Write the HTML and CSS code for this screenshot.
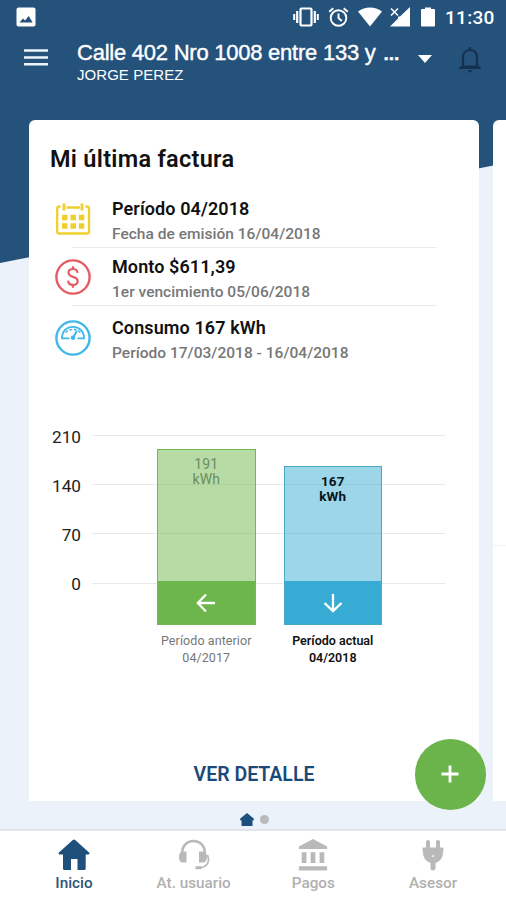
FILE: index.html
```html
<!DOCTYPE html>
<html lang="es">
<head>
<meta charset="utf-8">
<title>Mi última factura</title>
<link rel="stylesheet" href="styles.css">
</head>
<body>
<div class="app">
  <header class="header">
    <div class="status">
      <svg class="status-photo" width="20" height="20" viewBox="0 0 20 20"><rect x=".5" y=".5" width="19" height="19" rx="2" fill="#fff"/><path d="M3.500 15.500l3.500-4 2 2 3.700-4.500 4 6.500z" fill="#24527b"/></svg>
      <svg class="status-vibrate" width="26" height="20" viewBox="0 0 26 20" fill="none" stroke="#fff"><rect x="7.500" y="1.500" width="11" height="17" rx="1" stroke-width="2.200"/><path d="M4.200 4v12M21.800 4v12" stroke-width="2.200"/><path d="M1.200 7v6M24.800 7v6" stroke-width="2"/></svg>
      <svg class="status-alarm" width="21" height="20" viewBox="0 0 21 20" fill="none" stroke="#fff" stroke-width="1.900"><circle cx="10.500" cy="11" r="7.800"/><path d="M10.500 6.500V11l3.300 3M1.200 4.800l4.100-3.500M19.800 4.800l-4.100-3.500"/></svg>
      <svg class="status-wifi" width="24" height="20" viewBox="0 0 24 20"><path d="M0 4.500C7 -.8 17 -.8 24 4.500L12 19.500z" fill="#fff"/></svg>
      <svg class="status-signal" width="20" height="20" viewBox="0 0 20 20"><path d="M20 0v19.500H0L8 11.500V9.500h2z" fill="#fff"/><path d="M1 1.500l7 7M8 1.500l-7 7" stroke="#fff" stroke-width="1.500"/></svg>
      <svg class="status-battery" width="14" height="20" viewBox="0 0 14 20"><path d="M1 2h3V.5h6V2h3q1 0 1 1v15.500q0 1-1 1H1q-1 0-1-1V3q0-1 1-1z" fill="#fff"/></svg>
      <span class="status-time">11:30</span>
    </div>
    <div class="bar">
      <svg class="menu" width="24" height="17" viewBox="0 0 24 17"><path d="M0 1.500h24M0 8.500h24M0 15.300h24" stroke="#edf3fa" stroke-width="2.500"/></svg>
      <div class="account">
        <div class="address">Calle 402 Nro 1008 entre 133 y <span class="ellipsis">...</span></div>
        <div class="owner">JORGE PEREZ</div>
      </div>
      <svg class="caret" width="14" height="8" viewBox="0 0 14 8"><path d="M0 0h14L7 8z" fill="#fff"/></svg>
      <svg class="bell" width="22" height="27" viewBox="0 0 22 27"><path d="M4 21V11.500C4 6.500 7 4 11 4s7 2.500 7 7.500V21M11 1v3" fill="none" stroke="#15314e" stroke-width="2.200"/><path d="M0 22l2.500-2.500h17L22 22v1H0zM8.500 24.200h5q-.5 2.300-2.500 2.300t-2.500-2.300z" fill="#15314e"/></svg>
    </div>
  </header>

  <main class="slides">
    <section class="card">
      <h1 class="title">Mi última factura</h1>
      <div class="row row-date">
        <svg class="icon" width="36" height="36" viewBox="0 0 36 36" fill="none" stroke="#f0ce2e"><path d="M5.500 5.500H4Q2.200 5.500 2.200 8v22.500Q2.200 32.500 4 32.500h28q2 0 2-2V8q0-2.500-2-2.500h-1.500M11.500 6.500h13.500" stroke-width="2.300"/><path d="M9 2.500v7M27 2.500v7" stroke-width="2.800"/><path d="M7 16.500h5.500M15.500 16.500H21M23.800 16.500h5.500M7 25h5.500M15.500 25H21M23.800 25h5.500" stroke-width="5.500"/></svg>
        <div class="row-text"><div class="row-name">Período 04/2018</div><div class="row-sub">Fecha de emisión 16/04/2018</div></div>
      </div>
      <div class="row row-amount">
        <svg class="icon" width="36" height="36" viewBox="0 0 36 36" fill="none" stroke="#e45c65"><circle cx="18" cy="18" r="16.600" stroke-width="2.400"/><path d="M22.500 13.800c-.2-2.600-2-3.800-4.500-3.800s-4.500 1.300-4.500 3.700c0 5.300 9.200 3 9.200 8.200 0 2.500-2 3.900-4.700 3.900s-4.700-1.300-4.900-4.200M18 7.300V10M18 25.800v3" stroke-width="2.200"/></svg>
        <div class="row-text"><div class="row-name">Monto $611,39</div><div class="row-sub">1er vencimiento 05/06/2018</div></div>
      </div>
      <div class="row row-usage">
        <svg class="icon" width="36" height="36" viewBox="0 0 36 36" fill="none" stroke="#3eb9e8"><circle cx="18" cy="18" r="16.600" stroke-width="2.400"/><path d="M14.500 18.300H7c0-7 4.500-11.500 11-11.500s11 4.500 11 11.500h-6.500" stroke-width="1.800"/><path d="M10.500 12.500Q13.500 9.500 18 9.500t7.500 3" stroke-width="1.500" stroke-dasharray="3 1.500"/><path d="M21.800 11l-3.300 6" stroke-width="2"/><circle cx="18" cy="17.700" r="2.200" fill="#3eb9e8" stroke="none"/></svg>
        <div class="row-text"><div class="row-name">Consumo 167 kWh</div><div class="row-sub">Período 17/03/2018 - 16/04/2018</div></div>
      </div>

      <div class="chart">
        <div class="axis">
          <div class="tick"><span>210</span><i></i></div>
          <div class="tick"><span>140</span><i></i></div>
          <div class="tick"><span>70</span><i></i></div>
          <div class="tick"><span>0</span><i></i></div>
        </div>
        <div class="bars">
          <div class="column previous">
            <div class="fill"><div class="amount">191<br>kWh</div><div class="foot"><svg width="20" height="20" viewBox="0 0 20 20" fill="none" stroke="#fff" stroke-width="2.300"><path d="M19 10H2M10 1.500L1.800 10l8.200 8.500"/></svg></div></div>
            <div class="caption">Período anterior<br>04/2017</div>
          </div>
          <div class="column current">
            <div class="fill"><div class="amount">167<br>kWh</div><div class="foot"><svg width="20" height="20" viewBox="0 0 20 20" fill="none" stroke="#fff" stroke-width="2.300"><path d="M10 1v17M1.500 10l8.500 8.200 8.500-8.200"/></svg></div></div>
            <div class="caption">Período actual<br>04/2018</div>
          </div>
        </div>
      </div>
      <div class="detail">VER DETALLE</div>
    </section>
    <section class="card next"><div class="next-line"></div></section>
  </main>

  <div class="pager">
    <svg width="14" height="13" viewBox="0 0 14 13"><path d="M7 0l7 5.800-.5 1.700h-1V13h-11V7.500h-1L0 5.800z" fill="#1d507e"/></svg>
    <span class="dot"></span>
  </div>

  <nav class="nav">
    <div class="item active">
      <svg width="32" height="32" viewBox="0 0 32 32" fill="#1f507c"><path d="M16 .5q.8 0 1.500.7l13.800 12.600q.8 1.200-.8 1.700h-2.800V29.500q0 1.500-1.500 1.500h-6.700V20h-6.500v11H6.500Q5 31 5 29.500V15.500H1.500q-1.600-.5-.8-1.700L14.500 1.200Q15.200.5 16 .5z"/></svg>
      <span>Inicio</span>
    </div>
    <div class="item user">
      <svg width="32" height="32" viewBox="0 0 32 32" fill="none" stroke="#b9b9b9"><path d="M4.200 14C4 7 9 2 15.500 2S27 7 26.800 14" stroke-width="2.600"/><path d="M8.500 12.500v11H5Q1 23.500 1 18T5 12.500zM21 12.500v11h3.500q4.500 0 4.500-5.500t-4.500-5.500z" fill="#b9b9b9" stroke="none"/><path d="M29.500 16c3 7-1 12-6.500 12.500H18" stroke-width="1.700"/><path d="M17.500 28.700h6" stroke-width="3"/></svg>
      <span>At. usuario</span>
    </div>
    <div class="item pay">
      <svg width="32" height="34" viewBox="0 0 32 34" fill="#b9b9b9"><path d="M16 0L31 8v2.500H1V8zM4 14h5v11.500H4zM13.500 14h5v11.500h-5zM23 14h5v11.500h-5zM1 29h30v4.500H1z"/></svg>
      <span>Pagos</span>
    </div>
    <div class="item advisor">
      <svg width="24" height="32" viewBox="0 0 24 32" fill="#b9b9b9"><path d="M5 2.500Q5 1 7 1t2 1.500v6h6v-6Q15 1 17 1t2 1.500v6h2.500q1.500 0 1 2L21.500 17q-1 4-4 5.500l-3 1.500v5.500q0 2-2.500 2t-2.500-2V24l-3-1.500q-3-1.500-4-5.500L1.500 10.500q-.5-2 1-2H5z"/><circle cx="12" cy="17" r="1.300" fill="#e5e5e5"/></svg>
      <span>Asesor</span>
    </div>
  </nav>
  <button class="add" aria-label="+"><svg width="18" height="18" viewBox="0 0 18 18"><path d="M9 .5v17M.5 9h17" stroke="#fff" stroke-width="2.800"/></svg></button>
</div>
</body>
</html>
```
FILE: styles.css
```css
* { box-sizing: border-box; }
body { margin: 0; font-family: Roboto, sans-serif; }
svg { display: block; flex: none; }
.app {
  position: relative;
  display: flex;
  flex-direction: column;
  width: 506px;
  height: 900px;
  overflow: hidden;
  background: #ebf2fa;
}
.app::before {
  content: "";
  position: absolute;
  inset: 0 0 auto;
  height: 263px;
  background: #24527b;
  clip-path: polygon(0 0, 100% 0, 100% 163px, 0 263px);
}
.header { position: relative; height: 120px; color: #fff; }
.status { display: flex; align-items: center; height: 34px; padding: 0 11px 0 16px; }
.status-vibrate { margin-left: auto; }
.status-alarm { margin-left: 9px; }
.status-wifi { margin-left: 9px; }
.status-signal { margin-left: 8px; }
.status-battery { margin-left: 11px; }
.status-time { width: 50px; margin-left: 10px; padding-top: 2px; font-size: 19px; font-weight: 500; line-height: 34px; letter-spacing: .3px; white-space: nowrap; }
.bar { display: flex; align-items: flex-start; padding-left: 24px; }
.menu { margin-top: 15px; }
.account { width: 324px; margin: 6px 0 0 29px; font-family: "Liberation Sans", sans-serif; white-space: nowrap; }
.address { font-size: 22px; line-height: 25px; letter-spacing: -.24px; -webkit-text-stroke: .4px #fff; }
.ellipsis { margin-left: 2px; font-size: 19px; font-weight: 700; letter-spacing: 0; }
.owner { font-size: 15px; line-height: 17px; letter-spacing: .05px; }
.caret { margin: 21px 0 0 17px; }
.bell { margin: 12px 0 0 27px; }
.slides { position: relative; display: flex; gap: 14px; height: 680.500px; padding-left: 29px; }
.card { flex: none; width: 450px; height: 680.500px; background: #fff; border-radius: 6px 6px 0 0; }
.next { padding-top: 425px; }
.next-line { height: 1px; background: #f2f2f2; }
.title { margin: 0; padding: 24px 0 0 21px; font-size: 23.500px; font-weight: 600; line-height: 31px; letter-spacing: .28px; color: #111; }
.row { display: flex; padding-left: 26px; }
.row-date { height: 73px; padding-top: 22px; }
.row-amount { height: 58px; padding-top: 7px; }
.row-usage { height: 60px; padding-top: 10px; }
.row-date, .row-amount { background: linear-gradient(#ebebeb, #ebebeb) 43px 100% / 365px 1px no-repeat; }
.row .icon { margin-top: 4px; }
.row-text { margin-left: 21px; white-space: nowrap; }
.row-name { font-size: 18px; font-weight: 600; line-height: 24px; letter-spacing: .1px; color: #111; }
.row-sub { padding-top: 1px; font-size: 15.500px; font-weight: 500; line-height: 25px; letter-spacing: .02px; color: #777; }
.chart { display: grid; height: 268px; margin-top: 50px; }
.axis, .bars { grid-area: 1 / 1; }
.axis { margin-top: -5px; }
.tick { display: flex; align-items: center; height: 49.200px; }
.tick span { width: 52px; padding-top: 2px; text-align: right; font-size: 17.200px; color: #222; }
.tick i { width: 353px; height: 1px; margin-left: 11px; background: #e9e9e9; }
.bars { display: flex; align-items: flex-start; gap: 28px; padding-left: 128px; }
.column { width: 98.500px; text-align: center; white-space: nowrap; }
.fill { display: flex; flex-direction: column; justify-content: space-between; }
.previous { margin-top: 33px; }
.current { margin-top: 50px; }
.previous .fill { height: 176px; border: 1.500px solid #70b957; background: rgba(112, 184, 76, .5); }
.current .fill { height: 159px; border: 1.500px solid #48a9c6; background: rgba(60, 174, 211, .5); }
.amount { padding-top: 7px; font-size: 14px; line-height: 15px; letter-spacing: .1px; }
.previous .amount { color: #6c8c61; }
.current .amount { font-weight: 700; font-size: 13.500px; color: #08141a; }
.foot { display: grid; place-items: center; height: 43px; }
.previous .foot { background: #6cb64b; }
.current .foot { background: #37abd3; }
.caption { margin: 7px -5px 0; font-size: 12.500px; line-height: 17px; }
.previous .caption { color: #777; letter-spacing: .08px; }
.current .caption { color: #111; font-weight: 600; }
.detail { margin-top: 79px; text-align: center; font-size: 19.500px; font-weight: 600; line-height: 24px; color: #1b4a78; }
.pager { position: relative; display: flex; align-items: flex-start; gap: 6px; height: 28px; padding: 12px 0 0 240px; }
.dot { width: 9px; height: 9px; margin-top: 2px; border-radius: 50%; background: #b8babd; }
.nav { position: relative; display: grid; grid-template-columns: repeat(4, 119.700px); justify-content: center; height: 71.500px; padding-left: 1px; border-top: 2px solid #e2e5ea; background: #fff; }
.item { display: flex; flex-direction: column; align-items: center; padding-top: 8px; font-size: 15.300px; font-weight: 500; color: #b0b0b0; white-space: nowrap; }
.item svg { height: 32px; }
.item span { margin-top: 3px; line-height: 18px; }
.active { color: #315574; }
.add { position: absolute; left: 415px; top: 739px; display: grid; place-items: center; width: 70.500px; height: 70.500px; padding: 0; border: 0; border-radius: 50%; background: #6ab44b; }
```
